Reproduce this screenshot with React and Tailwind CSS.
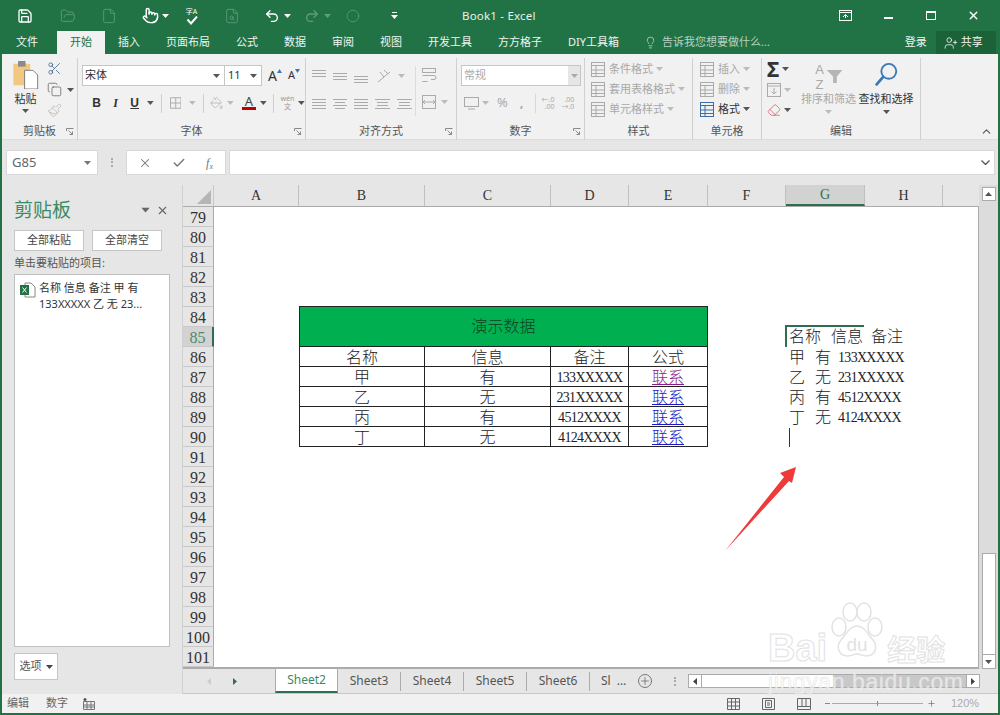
import { Save, FolderOpen, File, Pointer, FileSearch, Undo2, Redo2, Circle, Lightbulb, UserPlus, X, Scissors, Copy, Paintbrush, PaintBucket, Eraser, ChevronUp, Check, Plus } from 'lucide-react'

const Caret = ({ c = '#555', className = '' }) => (
  <svg width="7" height="4" viewBox="0 0 7 4" className={className}><path d="M0 0h7L3.5 4z" fill={c} /></svg>
)

const Launcher = () => (
  <svg width="8" height="8" viewBox="0 0 8 8" className="justify-self-end mr-[3px]" fill="none" stroke="#888">
    <path d="M.5 3V.5H7.5" /><path d="M2.5 2.5l4 4M3.5 6.5h3v-3" />
  </svg>
)

const Lines = ({ ys, c = '#aaa', w = 14, xs }) => (
  <svg width={w} height="14" viewBox={`0 0 ${w} 14`} stroke={c} fill="none">
    {ys.map((y, i) => <path key={i} d={`M${xs ? xs[i] : 0} ${y + 0.5}H${xs ? w - xs[i] : w}`} />)}
  </svg>
)

function Group({ width, label, launcher, children }) {
  return (
    <div className={`${width} shrink-0 flex flex-col border-r border-[#d0d0d0] mt-[4px] h-[82px]`}>
      <div className="h-[65px]">{children}</div>
      <div className="grid grid-cols-[1fr_auto_1fr] items-center h-[17px] text-[11px] text-[#555]">
        <span />
        <span>{label}</span>
        {launcher ? <Launcher /> : <span />}
      </div>
    </div>
  )
}

const StyleRow = ({ icon, text, dark }) => (
  <div className={`flex items-center h-[20px] text-[11px] ${dark ? 'text-[#333]' : 'text-[#a8a8a8]'}`}>
    <span className="w-[18px] flex justify-center mr-[2px]">{icon}</span>
    <span>{text}</span>
    <Caret c={dark ? '#555' : '#bbb'} className="ml-[3px]" />
  </div>
)

const CellIcon = ({ c = '#aaa' }) => (
  <svg width="15" height="15" viewBox="0 0 15 15" fill="none" stroke={c}>
    <rect x=".5" y=".5" width="13" height="3" /><rect x=".5" y="3.5" width="13" height="11" />
    <path d="M5 3.5v11M.5 8h13M.5 11.5h13" />
  </svg>
)

const tabs = ['插入', '页面布局', '公式', '数据', '审阅', '视图', '开发工具', '方方格子', 'DIY工具箱']
const cols = [['A', 'w-[85px]'], ['B', 'w-[126px]'], ['C', 'w-[126px]'], ['D', 'w-[78px]'], ['E', 'w-[79px]'], ['F', 'w-[78px]'], ['G', 'w-[79px]'], ['H', 'w-[78px]']]
const rows = Array.from({ length: 23 }, (_, i) => 79 + i)
const data = [
  ['甲', '有', '133XXXXX', 'text-[#8a1f8a]'],
  ['乙', '无', '231XXXXX', 'text-[#1a1ac8]'],
  ['丙', '有', '4512XXXX', 'text-[#1a1ac8]'],
  ['丁', '无', '4124XXXX', 'text-[#1a1ac8]'],
]
const serif = "[font-family:'Liberation_Serif','Noto_Sans_CJK_SC',serif]"

function Sheet() {
  return (
    <div className={`grid grid-cols-[85px_126px_126px_78px_79px_78px_79px_113px] grid-rows-[repeat(23,20px)] bg-white flex-1 text-[16px] font-light text-[#222] ${serif}`}>
      <table className="col-start-2 col-span-4 row-start-6 row-span-7 -mt-px border-collapse table-fixed w-[408px] h-[141px] self-start text-center border border-[#222]">
        <colgroup>
          <col className="w-[125px]" />
          <col className="w-[126px]" />
          <col className="w-[78px]" />
          <col className="w-[79px]" />
        </colgroup>
        <tbody>
          <tr className="h-[40px] bg-[#00b050]">
            <td colSpan={4} className="border border-[#222] text-[#123f1e]">演示数据</td>
          </tr>
          <tr className="h-[20px]">
            <td className="border border-[#222] p-0 pt-[2px] leading-[17px]">名称</td>
            <td className="border border-[#222] p-0 pt-[2px] leading-[17px]">信息</td>
            <td className="border border-[#222] p-0 pt-[2px] leading-[17px]">备注</td>
            <td className="border border-[#222] p-0 pt-[2px] leading-[17px]">公式</td>
          </tr>
          {data.map((r) => (
            <tr key={r[0]} className="h-[20px]">
              <td className="border border-[#222] p-0 pt-[2px] leading-[17px]">{r[0]}</td>
              <td className="border border-[#222] p-0 pt-[2px] leading-[17px]">{r[1]}</td>
              <td className="border border-[#222] p-0 pt-[2px] leading-[17px] text-[14px] tracking-[-.7px]">{r[2]}</td>
              <td className={`border border-[#222] p-0 pt-[2px] leading-[17px] underline ${r[3]}`}>联系</td>
            </tr>
          ))}
        </tbody>
      </table>

      {/* G85 pasted text */}
      <div className="col-start-7 col-span-2 row-start-7 flex items-center -ml-px">
        <div className="w-[79px] h-[22px] -mt-[2px] border-t-2 border-l-2 border-[#2f6f4f] shrink-0 flex items-center pl-[2px] gap-[10px] whitespace-nowrap">
          <span>名称</span><span>信息</span>
        </div>
        <span className="-ml-[72px] pl-[79px] whitespace-nowrap">备注</span>
      </div>
      {data.map((r, i) => (
        <div key={r[0]} className={`col-start-7 col-span-2 flex items-center pl-[3px] pt-[1px] gap-[10px] whitespace-nowrap ${['row-start-8', 'row-start-9', 'row-start-10', 'row-start-11'][i]}`}>
          <span>{r[0]}</span><span>{r[1]}</span><span className="text-[14px] tracking-[-.7px] -ml-[3px]">{r[2]}</span>
        </div>
      ))}
      <div className="col-start-7 row-start-12 pl-[3px] flex items-center">
        <div className="w-px h-[19px] bg-[#333]" />
      </div>
    </div>
  )
}

export default function App() {
  return (
    <div className="relative w-[1000px] h-[715px] overflow-hidden flex flex-col border-x-2 border-b-2 border-[#217346] bg-[#e6e6e6] text-[#444] [font-family:'Noto_Sans','Noto_Sans_CJK_SC',sans-serif]">
      {/* title bar */}
      <div className="h-[31px] shrink-0 bg-[#217346] flex items-center text-white">
        <Save size={16} strokeWidth={2} className="ml-[15px]" />
        <FolderOpen size={16} strokeWidth={1.3} className="ml-[27px] text-[#5f9c7c]" />
        <File size={16} strokeWidth={1.3} className="ml-[25px] text-[#5f9c7c]" />
        <Pointer size={17} strokeWidth={2} className="ml-[25px]" />
        <Caret c="#fff" className="ml-[3px]" />
        <div className="ml-[15px] w-[15px] h-[18px] flex flex-col items-center">
          <span className="text-[7px] leading-[9px] whitespace-nowrap">字A</span>
          <svg width="12" height="9" viewBox="0 0 12 9" fill="none" stroke="#fff" strokeWidth="2"><path d="M1.5 3.5L5 7.5l6-7" /></svg>
        </div>
        <FileSearch size={16} strokeWidth={1.3} className="ml-[25px] text-[#5f9c7c]" />
        <Undo2 size={16} strokeWidth={2} className="ml-[24px]" />
        <Caret c="#fff" className="ml-[4px]" />
        <Redo2 size={16} strokeWidth={2} className="ml-[13px] text-[#5f9c7c]" />
        <Caret c="#5f9c7c" className="ml-[4px]" />
        <Circle size={14} strokeWidth={1.3} className="ml-[15px] text-[#5f9c7c]" />
        <svg width="7" height="7" viewBox="0 0 7 7" className="ml-[31px]" fill="#fff"><path d="M1 0h5v1H1zM0 3h7L3.5 7z" /></svg>
        <span className="ml-[64px] text-[11.5px] tracking-[.2px] text-[#e8f1ec]">Book1 - Excel</span>
        <svg width="13" height="11" viewBox="0 0 13 11" className="ml-[303px]" fill="none" stroke="#fff"><rect x=".5" y=".5" width="12" height="10" /><path d="M.5 2.5h12M4 7l2.5-2.5L9 7M6.5 5v3" /></svg>
        <div className="ml-[32px] w-[9px] h-[2px] bg-white mt-[4px]" />
        <div className="ml-[33px] w-[10px] h-[9px] border border-white border-t-2" />
        <X size={13} strokeWidth={2.5} className="ml-[31px]" />
      </div>

      {/* tabs */}
      <div className="h-[23px] shrink-0 bg-[#217346] flex items-stretch pl-[1px] text-[11px] text-[#f0f5f2]">
        <span className="px-[13px] mr-[6px] flex items-center">文件</span>
        <span className="px-[13px] flex items-center bg-[#f1f1f1] text-[#217346]">开始</span>
        {tabs.map((t) => <span key={t} className="px-[13px] flex items-center whitespace-nowrap">{t}</span>)}
        <Lightbulb size={13} strokeWidth={1.3} className="ml-[12px] self-center text-[#cfe0d6]" />
        <span className="ml-[5px] flex items-center text-[#b7d2c3] whitespace-nowrap">告诉我您想要做什么...</span>
        <span className="ml-[135px] flex items-center">登录</span>
        <div className="ml-[9px] w-[60px] bg-[#1c6238] flex items-center pl-[8px] gap-[3px]">
          <UserPlus size={14} strokeWidth={1.4} />
          <span>共享</span>
        </div>
      </div>

      {/* ribbon */}
      <div className="h-[86px] shrink-0 bg-[#f1f1f1] border-b border-[#dcdcdc] flex relative">
        <Group width="w-[76px]" label="剪贴板" launcher>
          <div className="flex pl-[10px]">
            <div className="w-[27px] flex flex-col items-center">
              <svg width="26" height="28" viewBox="0 0 27 30" className="mt-[3px]">
                <rect x="0" y="3" width="18" height="23" rx="1" fill="#f2c77f" />
                <rect x="5" y="0" width="8" height="6" fill="#8a8a8a" />
                <path d="M12 10h9l5 5v15H12z" fill="#fff" stroke="#777" />
              </svg>
              <span className="text-[11px] leading-[14px] text-[#333] mt-[3px] whitespace-nowrap">粘贴</span>
              <Caret className="mt-[3px]" />
            </div>
            <div className="ml-[8px] flex flex-col gap-[6px] pt-[3px]">
              <Scissors size={15} strokeWidth={1.3} className="text-[#43658a]" />
              <div className="flex items-center gap-[5px]">
                <Copy size={15} strokeWidth={1.1} className="text-[#555]" />
                <Caret />
              </div>
              <Paintbrush size={15} strokeWidth={1.3} className="text-[#bbb]" />
            </div>
          </div>
        </Group>

        <Group width="w-[228px]" label="字体" launcher>
          <div className="flex items-center pl-[4px] pt-[7px] text-[#333]">
            <div className="w-[143px] h-[21px] bg-white border border-[#c6c6c6] flex items-center justify-between px-[2px] pr-[4px] text-[11px]">
              <span>宋体</span><Caret />
            </div>
            <div className="w-[37px] h-[21px] bg-white border border-l-0 border-[#c6c6c6] flex items-center justify-between px-[3px] pr-[4px] text-[11px]">
              <span>11</span><Caret />
            </div>
            <span className="ml-[6px] text-[14px]">A</span>
            <svg width="5" height="4" viewBox="0 0 5 4" className="-mt-[10px]"><path d="M0 4h5L2.5 0z" fill="#3b78b5" /></svg>
            <span className="ml-[6px] text-[11px]">A</span>
            <svg width="5" height="4" viewBox="0 0 5 4" className="-mt-[10px]"><path d="M0 0h5L2.5 4z" fill="#3b78b5" /></svg>
          </div>
          <div className="flex items-center h-[22px] mt-[6px] pl-[9px] text-[#333] text-[12px] font-bold">
            <span className="w-[20px] text-center [font-family:'Liberation_Sans',sans-serif]">B</span>
            <span className="w-[20px] text-center italic [font-family:'Liberation_Serif',serif]">I</span>
            <span className="w-[20px] text-center underline [font-family:'Liberation_Sans',sans-serif]">U</span>
            <Caret className="ml-[3px]" />
            <div className="ml-[7px] w-px h-[19px] bg-[#d0d0d0]" />
            <svg width="12" height="12" viewBox="0 0 12 12" className="ml-[8px]" fill="none" stroke="#aaa"><path d="M.5.5h11v11H.5zM6 .5v11M.5 6h11" /></svg>
            <Caret c="#bbb" className="ml-[8px]" />
            <div className="ml-[7px] w-px h-[19px] bg-[#d0d0d0]" />
            <PaintBucket size={14} strokeWidth={1.2} className="ml-[6px] text-[#aaa]" />
            <Caret c="#bbb" className="ml-[4px]" />
            <div className="ml-[8px] w-[14px] flex flex-col items-center leading-[11px] font-normal text-[13px] text-[#444]">
              <span>A</span><span className="w-[14px] h-[3px] bg-[#c00000]" />
            </div>
            <Caret className="ml-[4px]" />
            <div className="ml-[6px] w-px h-[19px] bg-[#d0d0d0]" />
            <div className="ml-[7px] w-[14px] flex flex-col items-center font-normal text-[7px] leading-[8px] text-[#999]"><span>wén</span><span>文</span></div>
            <Caret className="ml-[4px]" />
          </div>
        </Group>

        <Group width="w-[151px]" label="对齐方式" launcher>
          <div className="flex h-full">
            <div className="w-[110px] border-r border-[#dcdcdc] h-[50px] mt-[8px] pl-[6px]">
              <div className="flex items-center gap-[7px] h-[20px]">
                <Lines ys={[1, 4, 7]} />
                <Lines ys={[4, 7, 10]} />
                <Lines ys={[7, 10, 13]} />
                <svg width="14" height="14" viewBox="0 0 14 14" fill="none" stroke="#aaa" className="ml-[2px]"><path d="M1 13L13 3M3 3l4 5M7 1l4 4" /></svg>
                <Caret c="#bbb" />
              </div>
              <div className="flex items-center gap-[7px] mt-[8px] h-[20px]">
                <Lines ys={[2, 5, 8, 11]} xs={[0, 0, 0, 0]} />
                <Lines ys={[2, 5, 8, 11]} xs={[0, 2, 0, 2]} />
                <Lines ys={[2, 5, 8, 11]} />
                <Lines ys={[2, 5, 8, 11]} xs={[0, 2, 2, 0]} w={15} />
                <Lines ys={[2, 5, 8, 11]} xs={[0, 2, 2, 0]} w={15} />
              </div>
            </div>
            <div className="pl-[6px] pt-[10px]">
              <svg width="16" height="15" viewBox="0 0 16 15" fill="none" stroke="#aaa"><rect x=".5" y=".5" width="13" height="4" /><path d="M.5 7.5H12a2 2 0 010 4H9M.5 13.5h5" /></svg>
              <div className="flex items-center gap-[5px] mt-[12px]">
                <svg width="14" height="14" viewBox="0 0 14 14" fill="none" stroke="#aaa"><rect x=".5" y=".5" width="13" height="13" /><path d="M.5 7h13M3 5l-2 2 2 2M11 5l2 2-2 2" /></svg>
                <Caret c="#bbb" />
              </div>
            </div>
          </div>
        </Group>

        <Group width="w-[128px]" label="数字" launcher>
          <div className="pl-[4px] pt-[7px]">
            <div className="w-[120px] h-[21px] bg-white border border-[#c6c6c6] flex items-center text-[11px] text-[#aaa] pl-[2px]">
              <span className="flex-1">常规</span>
              <span className="w-[12px] h-full bg-[#e6e6e6] flex items-center justify-center"><Caret c="#aaa" /></span>
            </div>
            <div className="flex items-center h-[22px] mt-[6px] text-[#aaa]">
              <svg width="15" height="13" viewBox="0 0 15 13" className="ml-[3px]" fill="none" stroke="#aaa"><rect x=".5" y=".5" width="14" height="9" /><path d="M4 12h7" /></svg>
              <Caret c="#bbb" className="ml-[3px]" />
              <span className="ml-[8px] text-[13px]">%</span>
              <span className="ml-[12px] text-[13px] font-bold">,</span>
              <div className="ml-[11px] w-px h-[19px] bg-[#d8d8d8]" />
              <div className="ml-[6px] text-[7px] leading-[7px] text-right"><div>←.0</div><div>.00</div></div>
              <div className="ml-[7px] text-[7px] leading-[7px] text-right"><div>.00</div><div>→.0</div></div>
            </div>
          </div>
        </Group>

        <Group width="w-[108px]" label="样式">
          <div className="pl-[4px] pt-[1px]">
            <StyleRow icon={<CellIcon />} text="条件格式" />
            <StyleRow icon={<CellIcon />} text="套用表格格式" />
            <StyleRow icon={<CellIcon />} text="单元格样式" />
          </div>
        </Group>

        <Group width="w-[69px]" label="单元格">
          <div className="pl-[5px] pt-[1px]">
            <StyleRow icon={<CellIcon />} text="插入" />
            <StyleRow icon={<CellIcon />} text="删除" />
            <StyleRow icon={<CellIcon c="#3b6ea5" />} text="格式" dark />
          </div>
        </Group>

        <Group width="w-[159px]" label="编辑">
          <div className="flex pl-[5px]">
            <div className="w-[33px] flex flex-col pt-[1px]">
              <div className="flex items-center h-[20px] gap-[3px]">
                <span className="text-[21px] leading-none text-[#333] font-bold">Σ</span><Caret />
              </div>
              <div className="flex items-center h-[21px] gap-[3px]">
                <svg width="14" height="14" viewBox="0 0 14 14" fill="none" stroke="#aaa"><rect x=".5" y=".5" width="13" height="13" /><path d="M.5 3h13M7 5v6M4.5 8.5L7 11l2.5-2.5" /></svg>
                <Caret c="#bbb" />
              </div>
              <div className="flex items-center h-[20px] gap-[3px]">
                <Eraser size={14} strokeWidth={1.4} className="text-[#d9616d]" />
                <Caret />
              </div>
            </div>
            <div className="w-[57px] flex flex-col items-center text-[#a8a8a8] pt-[4px]">
              <div className="h-[28px] flex items-start text-[13px] leading-[15px] [font-family:'Liberation_Sans',sans-serif]">
                <div className="w-[11px] flex flex-col items-center"><span>A</span><span>Z</span></div>
                <svg width="17" height="13" viewBox="0 0 17 14" className="mt-[8px] ml-[1px]"><path d="M0 0h17l-6 7v7H7V7z" fill="#b5b5b5" /></svg>
              </div>
              <span className="text-[11px] leading-[16px] mt-[1px] whitespace-nowrap">排序和筛选</span>
              <Caret c="#bbb" className="mt-[3px]" />
            </div>
            <div className="w-[58px] flex flex-col items-center pt-[4px] text-[#333]">
              <svg width="26" height="28" viewBox="0 0 26 30" fill="none">
                <circle cx="16" cy="10" r="8" stroke="#3b78b5" strokeWidth="2" />
                <path d="M10 16L3 24" stroke="#3b78b5" strokeWidth="3" strokeLinecap="round" />
              </svg>
              <span className="text-[11px] leading-[16px] mt-[1px] whitespace-nowrap">查找和选择</span>
              <Caret className="mt-[3px]" />
            </div>
          </div>
        </Group>

        <div className="flex-1 flex items-end justify-end pr-[5px] pb-[1px]">
          <ChevronUp size={13} strokeWidth={2} className="text-[#555]" />
        </div>
      </div>

      {/* formula bar */}
      <div className="h-[45px] shrink-0 flex items-center pl-[4px] pr-[3px]">
        <div className="w-[92px] h-[25px] bg-white border border-[#d8d8d8] flex items-center justify-between pl-[5px] pr-[6px] text-[13px] text-[#666]">
          <span>G85</span><Caret c="#777" />
        </div>
        <div className="ml-[13px] w-[2px] h-[9px] border-l-2 border-dotted border-[#aaa]" />
        <div className="ml-[13px] w-[100px] h-[25px] bg-white border border-[#d8d8d8] flex items-center justify-between pl-[11px] pr-[12px] text-[#777]">
          <X size={14} strokeWidth={1.8} />
          <Check size={14} strokeWidth={2.5} />
          <span className="italic text-[12px] [font-family:'Liberation_Serif',serif]">f<sub className="text-[8px]">x</sub></span>
        </div>
        <div className="ml-[3px] flex-1 h-[25px] bg-white border border-[#d8d8d8] flex items-center justify-end pr-[4px]">
          <svg width="9" height="5" viewBox="0 0 9 5" fill="none" stroke="#555" strokeWidth="1.3"><path d="M.5.5l4 4 4-4" /></svg>
        </div>
      </div>

      {/* main */}
      <div className="flex-1 flex min-h-0">
        {/* clipboard pane */}
        <div className="w-[181px] shrink-0 flex flex-col pl-[12px] pr-[11px] border-r border-[#d0d0d0]">
          <div className="h-[45px] flex items-center pt-[5px]">
            <span className="text-[19px] text-[#3a8a64]">剪贴板</span>
            <Caret c="#666" className="ml-auto mr-[7px] scale-125" />
            <X size={13} strokeWidth={2} className="text-[#666] mr-[2px]" />
          </div>
          <div className="flex justify-between pr-[9px]">
            <button className="w-[70px] h-[21px] bg-white border border-[#c6c6c6] text-[11px] text-[#444]">全部粘贴</button>
            <button className="w-[70px] h-[21px] bg-white border border-[#c6c6c6] text-[11px] text-[#444]">全部清空</button>
          </div>
          <div className="text-[11px] leading-[16px] mt-[4px] text-[#555]">单击要粘贴的项目:</div>
          <div className="mt-[3px] h-[373px] w-[156px] bg-white border border-[#c0c0c0] flex pl-[5px] pt-[5px]">
            <svg width="16" height="16" viewBox="0 0 16 16" fill="none" className="mt-[2px] shrink-0">
              <path d="M5 1h6l4 4v10H5z" stroke="#888" fill="#fff" />
              <rect x="0" y="3" width="9" height="10" fill="#217346" />
              <path d="M2.5 5.5l4 5M6.5 5.5l-4 5" stroke="#fff" />
            </svg>
            <div className="ml-[3px] text-[11px] leading-[16px] text-[#333]">名称 信息 备注 甲 有<br />133XXXXX 乙 无 23...</div>
          </div>
          <button className="mt-[6px] w-[44px] h-[27px] bg-white border border-[#c6c6c6] text-[11px] flex items-center justify-center gap-[4px] text-[#555]">
            选项 <Caret c="#444" />
          </button>
        </div>

        {/* sheet area */}
        <div className="flex-1 flex flex-col min-w-0">
          <div className="flex h-[484px] shrink-0">
            <div className="w-[796px] shrink-0 flex flex-col border-b-2 border-[#ababab]">
              <div className="flex h-[22px] shrink-0 border-b border-[#ababab]">
                <div className="w-[31px] flex items-end justify-end pr-[2px] pb-[2px] border-r border-[#c8c8c8]">
                  <svg width="14" height="14" viewBox="0 0 14 14"><path d="M14 0v14H0z" fill="#b5b5b5" /></svg>
                </div>
                {cols.map(([c, w]) => (
                  <div key={c} className={`${w} flex items-center justify-center border-r border-[#c0c0c0] text-[14px] ${serif} ${c === 'G' ? 'bg-[#d2d2d2] text-[#2f6f4f] border-b-2 border-b-[#2f6f4f]' : 'text-[#333]'}`}>{c}</div>
                ))}
              </div>
              <div className="flex flex-1 min-h-0 border-r border-[#ababab]">
                <div className={`w-[31px] shrink-0 ${serif} text-[16px] text-[#333]`}>
                  {rows.map((n) => (
                    <div key={n} className={`h-[20px] flex items-center justify-center pt-[2px] border-b border-[#c8c8c8] ${n === 85 ? 'bg-[#d2d2d2] text-[#4f8a6c] border-r-2 border-r-[#2f6f4f]' : 'border-r border-r-[#ababab]'}`}>{n}</div>
                  ))}
                </div>
                <Sheet />
              </div>
            </div>
            {/* vertical scrollbar */}
            <div className="flex-1 flex flex-col items-center pt-[2px] bg-[#dcdcdc]">
              <div className="w-[14px] h-[14px] bg-white border border-[#ababab] flex items-center justify-center"><svg width="7" height="4" viewBox="0 0 7 4"><path d="M0 4h7L3.5 0z" fill="#555" /></svg></div>
              <div className="mt-auto w-[14px] h-[102px] bg-white border border-[#ababab]" />
              <div className="w-[14px] h-[14px] bg-white border border-[#ababab] border-t-0 flex items-center justify-center"><Caret /></div>
            </div>
          </div>

          {/* sheet tabs */}
          <div className="h-[25px] shrink-0 flex items-center text-[12px] text-[#555] border-b border-[#c8c8c8]">
            <div className="w-[92px] h-full shrink-0 flex items-center pl-[24px] gap-[22px]">
              <svg width="4" height="7" viewBox="0 0 4 7"><path d="M4 0v7L0 3.5z" fill="#ccc" /></svg>
              <svg width="4" height="7" viewBox="0 0 4 7"><path d="M0 0v7l4-3.5z" fill="#2f6f4f" /></svg>
            </div>
            <div className="w-[63px] h-full bg-white border-b-2 border-[#2f6f4f] border-x border-x-[#ababab] -mt-[1px] flex items-center justify-center text-[#3a8a64]">Sheet2</div>
            {['Sheet3', 'Sheet4', 'Sheet5', 'Sheet6'].map((s) => (
              <div key={s} className="w-[63px] h-[19px] flex items-center justify-center border-r border-[#ababab]">{s}</div>
            ))}
            <span className="ml-[11px]">Sl</span>
            <span className="ml-[6px]">...</span>
            <Plus size={14} strokeWidth={1.3} className="ml-[12px] rounded-full border border-[#777] text-[#555]" />
            <div className="ml-[22px] w-[2px] h-[9px] border-l-2 border-dotted border-[#aaa]" />
            <div className="ml-[12px] w-[292px] h-[14px] flex bg-[#c8c8c8] border border-[#ababab]">
              <div className="w-[13px] bg-white flex items-center justify-center border-r border-[#ababab]"><svg width="4" height="7" viewBox="0 0 4 7"><path d="M4 0v7L0 3.5z" fill="#444" /></svg></div>
              <div className="w-[131px] bg-white" />
              <div className="ml-auto w-[13px] bg-white flex items-center justify-center border-l border-[#ababab]"><svg width="4" height="7" viewBox="0 0 4 7"><path d="M0 0v7l4-3.5z" fill="#444" /></svg></div>
            </div>
          </div>
        </div>
      </div>

      {/* status bar */}
      <div className="h-[19px] shrink-0 bg-[#f1f1f1] flex items-center pl-[5px] text-[11px] text-[#666]">
        <span>编辑</span>
        <span className="ml-[17px]">数字</span>
        <svg width="12" height="12" viewBox="0 0 12 12" className="ml-[15px]" fill="none" stroke="#777"><path d="M.5 3.5h11v8H.5zM.5 7h11M.5 9h11M4 3.5v8M8 3.5v8" /><circle cx="2" cy="1.5" r="1.5" fill="#555" stroke="none" /></svg>
        <svg width="13" height="12" viewBox="0 0 13 12" className="ml-[632px]" fill="none" stroke="#666"><path d="M.5.5h12v11H.5zM4.5.5v11M8.5.5v11M.5 4h12M.5 8h12" /></svg>
        <svg width="13" height="12" viewBox="0 0 13 12" className="ml-[22px]" fill="none" stroke="#666"><path d="M.5.5h12v11H.5zM3.5 2.5h6v7h-6zM5 5h3M5 7h3" /></svg>
        <svg width="14" height="12" viewBox="0 0 14 12" className="ml-[22px]" fill="none" stroke="#666"><path d="M.5.5h13v11H.5zM.5 8.5h13M5 .5v8M9 .5v8" /></svg>
        <span className="ml-[14px] w-[5px] h-[1px] bg-[#888]" />
        <div className="ml-[2px] w-[91px] h-px bg-[#aaa] flex justify-center items-center"><span className="w-px h-[5px] bg-[#888]" /></div>
        <Plus size={9} strokeWidth={2} className="ml-[4px] text-[#777]" />
        <span className="ml-[15px] text-[#aaa] [font-family:'Liberation_Sans',sans-serif]">120%</span>
      </div>

      {/* annotation arrow */}
      <svg width="80" height="95" viewBox="0 0 80 95" className="absolute left-[719px] top-[460px] pointer-events-none">
        <path d="M4 91L63 17L59 13L75 7L71 23L68 21z" fill="#ef3a3c" />
      </svg>

      {/* baidu watermark */}
      <div className="absolute left-[766px] top-[600px] w-[182px] h-[95px] pointer-events-none flex flex-col">
        <div className="flex items-end h-[66px]">
          <span className="text-[38px] leading-[36px] font-bold text-white/70 [-webkit-text-stroke:1px_#e2e2e2] [font-family:'Liberation_Sans',sans-serif]">Bai</span>
          <svg width="54" height="64" viewBox="0 0 54 64" fill="#ffffff" fillOpacity=".7" stroke="#e2e2e2" strokeWidth="1.5" className="ml-[2px]">
            <ellipse cx="10" cy="25" rx="7" ry="9" />
            <ellipse cx="21" cy="10" rx="7" ry="9" />
            <ellipse cx="35" cy="10" rx="7" ry="9" />
            <ellipse cx="46" cy="25" rx="7" ry="9" />
            <path d="M28 24c8 0 11 9 16 14 5 6 3 16-7 16-4 0-6-2-9-2s-5 2-9 2c-10 0-12-10-7-16 5-5 8-14 16-14z" />
            <text x="28" y="49" textAnchor="middle" fontSize="19" stroke="none" fill="#e2e2e2" fillOpacity="1" fontFamily="Liberation Sans">du</text>
          </svg>
          <span className="ml-[4px] text-[29px] leading-[32px] font-bold text-white/70 [-webkit-text-stroke:1px_#e2e2e2]">经验</span>
        </div>
        <span className="mt-[4px] text-[23px] leading-[24px] tracking-[.6px] text-white/60 [-webkit-text-stroke:.5px_#dedede] [font-family:'Liberation_Sans',sans-serif] whitespace-nowrap">jingyan.baidu.com</span>
      </div>
    </div>
  )
}
